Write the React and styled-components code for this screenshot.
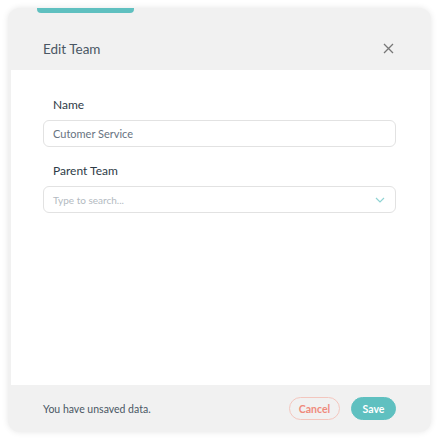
import styled, { createGlobalStyle } from "styled-components";

const GlobalStyle = createGlobalStyle`
  body {
    margin: 0;
    background: #ffffff;
    font-family: Lato, "Open Sans", sans-serif;
  }
`;

const Page = styled.div`
  width: 438px;
  height: 439px;
  padding: 8px 7px 7px 8px;
  box-sizing: border-box;
`;

const Card = styled.div`
  width: 423px;
  height: 424px;
  background: #f1f1f1;
  border-radius: 12px;
  box-shadow: 0 0 6px rgba(0, 0, 0, 0.1);
  display: flex;
  flex-direction: column;
  overflow: hidden;
`;

const TabMark = styled.div`
  width: 97px;
  height: 5px;
  margin-left: 29px;
  background: #5fc0c0;
  border-radius: 0 0 4px 4px;
  flex-shrink: 0;
`;

const Header = styled.div`
  height: 57px;
  box-sizing: border-box;
  padding: 14px 37px 0 35px;
  display: flex;
  align-items: center;
  justify-content: space-between;
  flex-shrink: 0;
`;

const Title = styled.h1`
  margin: 0;
  font-size: 13.5px;
  font-weight: 400;
  color: #4a5764;
`;

const Close = styled.button`
  border: none;
  background: none;
  padding: 0;
  width: 11px;
  height: 11px;
  display: flex;
  cursor: pointer;
`;

const Body = styled.div`
  flex: 1;
  background: #ffffff;
  margin: 0 1px 0 3px;
  padding: 27px 34px 0 32px;
  display: flex;
  flex-direction: column;
`;

const Label = styled.label`
  font-size: 12px;
  line-height: 16px;
  font-weight: 400;
  color: #2e3b47;
  padding-left: 10px;
  margin-bottom: 7px;
`;

const Field = styled.div`
  height: 27px;
  box-sizing: border-box;
  border: 1px solid #e2e2e2;
  border-radius: 6px;
  display: flex;
  align-items: center;
  justify-content: space-between;
  padding: 0 10px 0 9px;
  margin-bottom: ${(p) => p.$gap || 0}px;
`;

const Value = styled.span`
  font-size: ${(p) => (p.$placeholder ? "10px" : "11px")};
  color: ${(p) => (p.$placeholder ? "#b3bac1" : "#67737f")};
`;

const Footer = styled.div`
  height: 47px;
  box-sizing: border-box;
  padding: 0 35px;
  display: flex;
  align-items: center;
  justify-content: space-between;
  flex-shrink: 0;
`;

const Note = styled.span`
  font-size: 10.5px;
  color: #4a5764;
`;

const Actions = styled.div`
  display: flex;
  gap: 11px;
`;

const Btn = styled.button`
  height: 23px;
  box-sizing: border-box;
  border-radius: 12px;
  font-family: inherit;
  font-size: 10.5px;
  font-weight: 700;
  cursor: pointer;
  padding: 0;
  width: ${(p) => p.$w}px;
  border: 1px solid ${(p) => (p.$primary ? "#5fc0c0" : "#f3c6be")};
  background: ${(p) => (p.$primary ? "#5fc0c0" : "transparent")};
  color: ${(p) => (p.$primary ? "#ffffff" : "#ef8a7c")};
`;

const App = () => {
  return (
    <Page>
      <GlobalStyle />
      <Card>
        <TabMark />
        <Header>
          <Title>Edit Team</Title>
          <Close aria-label="close">
            <svg width="11" height="11" viewBox="0 0 11 11">
              <path d="M1 1 L10 10 M10 1 L1 10" stroke="#777777" strokeWidth="1.3" />
            </svg>
          </Close>
        </Header>
        <Body>
          <Label>Name</Label>
          <Field $gap={16}>
            <Value>Cutomer Service</Value>
          </Field>
          <Label>Parent Team</Label>
          <Field>
            <Value $placeholder>Type to search...</Value>
            <svg width="10" height="6" viewBox="0 0 10 6">
              <path d="M1 1 L5 5 L9 1" fill="none" stroke="#8fd3d3" strokeWidth="1.2" />
            </svg>
          </Field>
        </Body>
        <Footer>
          <Note>You have unsaved data.</Note>
          <Actions>
            <Btn $w={51}>Cancel</Btn>
            <Btn $w={45} $primary>Save</Btn>
          </Actions>
        </Footer>
      </Card>
    </Page>
  );
};

export default App;
